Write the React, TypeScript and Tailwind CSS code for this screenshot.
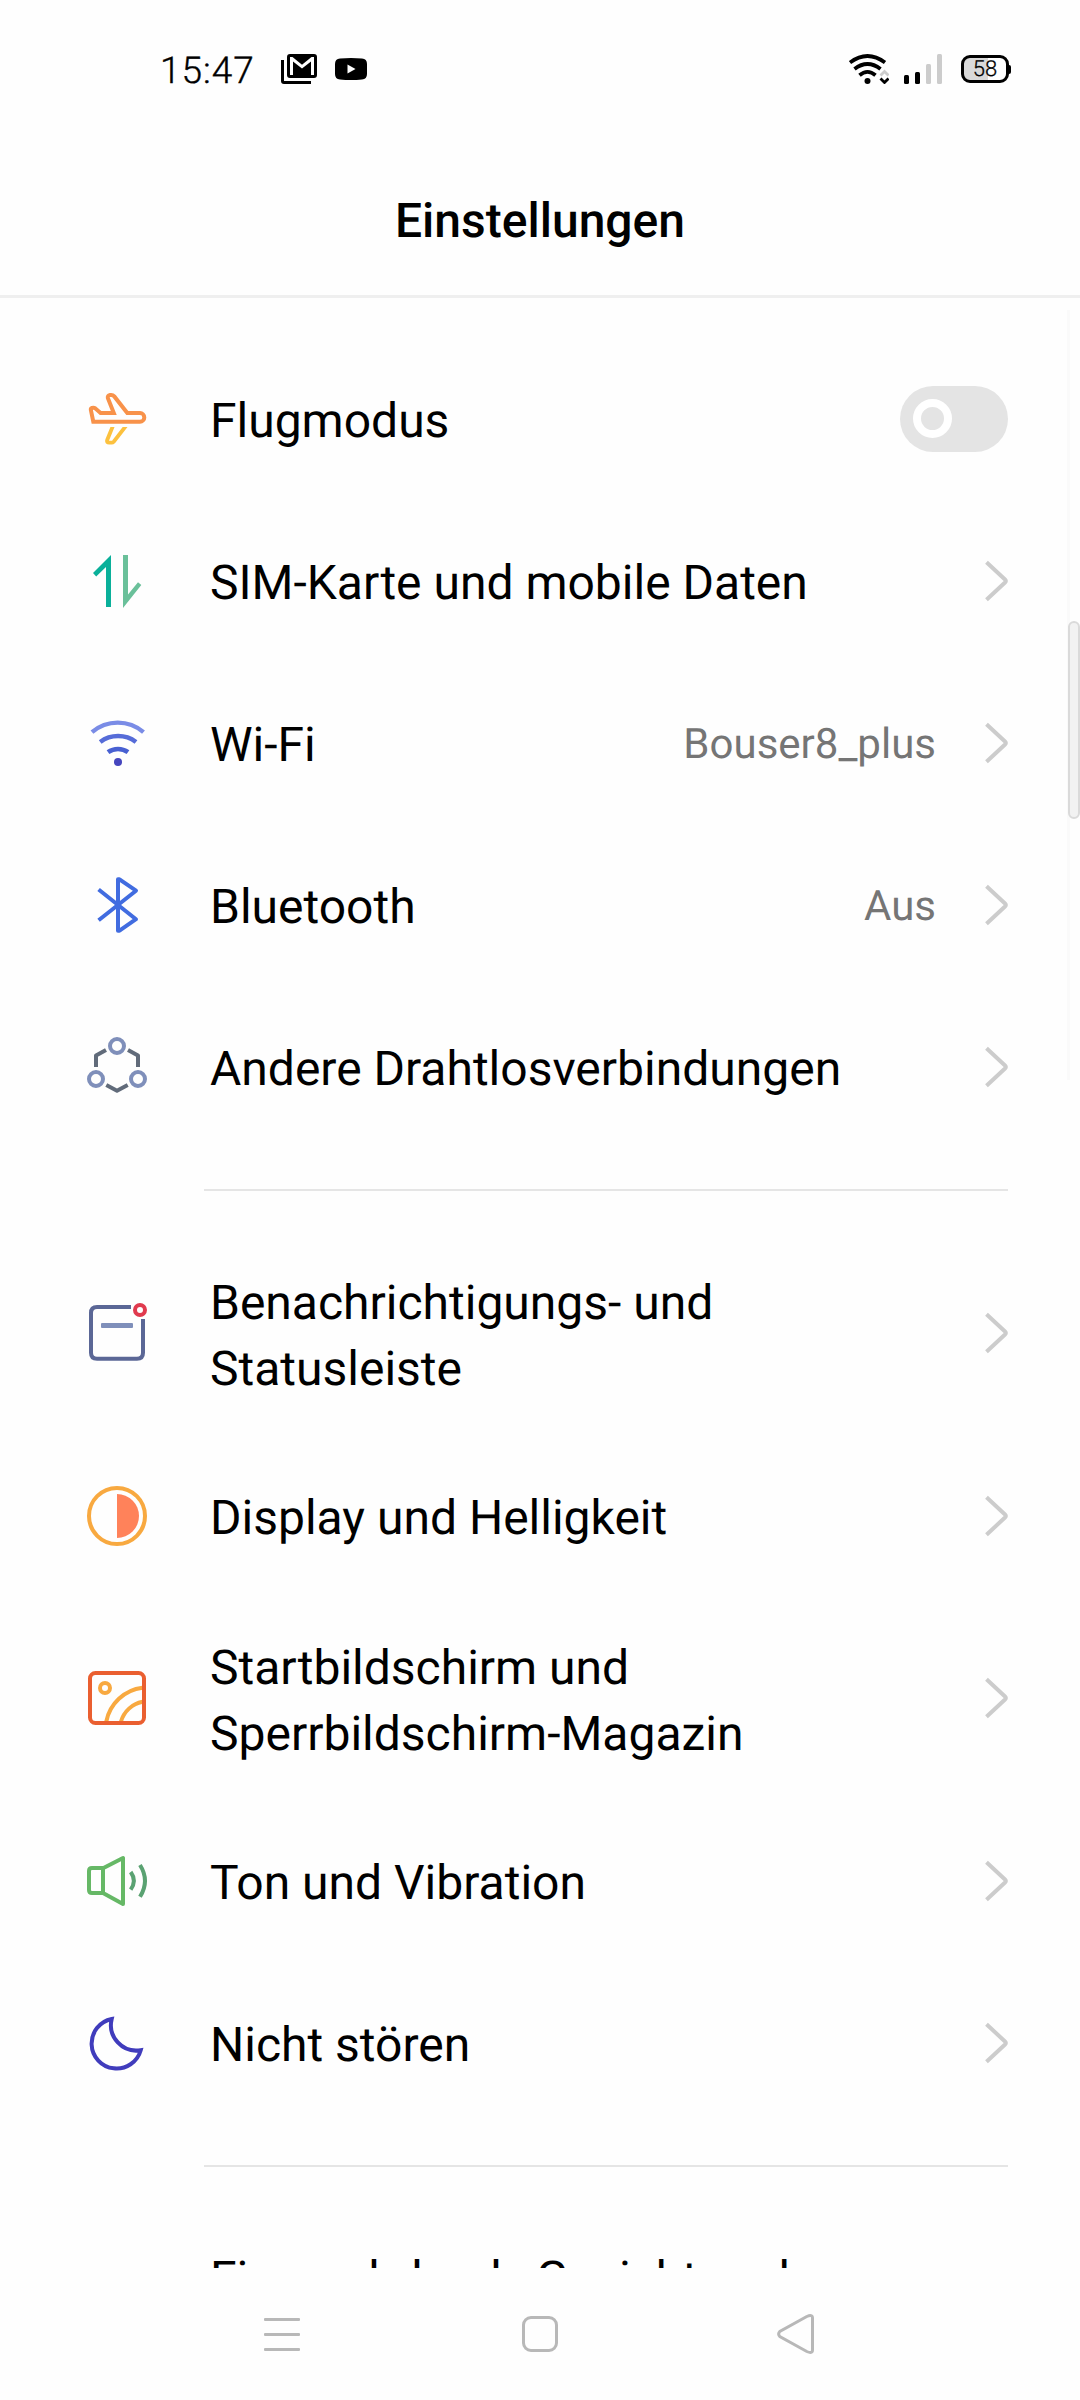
import type { ReactNode } from "react";

interface SettingsItem {
	id: string;
	lines: string[];
	icon: ReactNode;
	value?: string;
	toggle?: boolean;
}

function Icon({ children }: { children?: ReactNode }) {
	return (
		<svg className="h-[60px] w-[60px] shrink-0 overflow-visible" fill="none" viewBox="0 0 60 60">
			{children}
		</svg>
	);
}

const connectionItems: SettingsItem[] = [
	{
		id: "airplane",
		lines: ["Flugmodus"],
		toggle: true,
		icon: (
			<Icon>
				<clipPath id="lower-wing">
					<rect height="22" width="60" x="0" y="38" />
				</clipPath>
				<path
					d="M6.3 32.7H53a4.3 4.3 0 0 0 0-8.6H40.3L27.3 7.4Q26 6 24.2 6H23q-2.8.4-2.1 3.2L26.8 24H13.6L8.2 19.3Q6.7 18.4 5 19q-1.5.5-1.1 2.2Z"
					stroke="#f8924a"
					strokeWidth="4"
				/>
				<path
					clipPath="url(#lower-wing)"
					d="M26.5 35.5L20.2 51q-.8 2.7 2 2.7h2.4q1.2 0 2.1-1L41.2 34"
					stroke="#fcc13e"
					strokeWidth="3.8"
				/>
			</Icon>
		),
	},
	{
		id: "sim",
		lines: ["SIM-Karte und mobile Daten"],
		icon: (
			<Icon>
				<path d="M24 4L6 22l3.2 3.5L19 16v40h5z" fill="#0ab09a" />
				<path d="M36 4h5v39.5l10-12.2 3.3 2.7L36 57z" fill="#6ac09a" />
			</Icon>
		),
	},
	{
		id: "wifi",
		lines: ["Wi-Fi"],
		value: "Bouser8_plus",
		icon: (
			<Icon>
				<path d="M5 19.2A39.5 39.5 0 0 1 56.5 19.2" stroke="#7a8ce6" strokeWidth="4.4" />
				<path d="M13.2 29A30 30 0 0 1 49 29" stroke="#566cd8" strokeWidth="4.6" />
				<path d="M21 39.2A17 17 0 0 1 41 39.2" stroke="#4860d2" strokeWidth="4.6" />
				<circle cx="31" cy="49" fill="#4646be" r="4" />
			</Icon>
		),
	},
	{
		id: "bluetooth",
		lines: ["Bluetooth"],
		value: "Aus",
		icon: (
			<Icon>
				<path
					d="M11.6 14.5L49 44.2L32.5 55.7H31V4.3H32.5L49 15.7L11.6 45.2"
					stroke="#416ce0"
					strokeLinejoin="round"
					strokeWidth="4"
				/>
			</Icon>
		),
	},
	{
		id: "wireless",
		lines: ["Andere Drahtlosverbindungen"],
		icon: (
			<Icon>
				<g stroke="#616b7a" strokeLinejoin="round" strokeWidth="4">
					<path d="M19 13L9 18.5V30" />
					<path d="M41 13L51 18.5V30" />
					<path d="M19.3 48L30 53.7L40.7 48" />
				</g>
				<g stroke="#7f8fba" strokeWidth="4">
					<circle cx="30" cy="9" r="7" />
					<circle cx="9" cy="42" r="7" />
					<circle cx="51" cy="42" r="7" />
				</g>
			</Icon>
		),
	},
];

const deviceItems: SettingsItem[] = [
	{
		id: "notifications",
		lines: ["Benachrichtigungs- und", "Statusleiste"],
		icon: (
			<Icon>
				<path
					d="M44 4H10Q4 4 4 10V49.7Q4 55.7 10 55.7H50Q56 55.7 56 49.7V16"
					stroke="#5b6796"
					strokeWidth="4"
				/>
				<rect fill="#7f8fba" height="5" rx="1" width="32" x="14" y="20" />
				<circle cx="53" cy="7" r="5" stroke="#e03a4e" strokeWidth="4" />
			</Icon>
		),
	},
	{
		id: "display",
		lines: ["Display und Helligkeit"],
		icon: (
			<Icon>
				<circle cx="30" cy="30" r="28" stroke="#f8a940" strokeWidth="4" />
				<path d="M30 8a22 22 0 0 1 0 44z" fill="#ff825a" />
			</Icon>
		),
	},
	{
		id: "homescreen",
		lines: ["Startbildschirm und", "Sperrbildschirm-Magazin"],
		icon: (
			<Icon>
				<g stroke="#f8a940" strokeWidth="4">
					<circle cx="18" cy="20" r="5" />
					<path d="M19.3 53.5A42 42 0 0 1 55.5 19.7" />
					<path d="M34 53.5A28 28 0 0 1 55.5 33.8" />
				</g>
				<rect height="50" rx="5.5" stroke="#ea5f30" strokeWidth="4" width="54" x="3" y="5" />
			</Icon>
		),
	},
	{
		id: "sound",
		lines: ["Ton und Vibration"],
		icon: (
			<Icon>
				<g stroke="#66b866" strokeLinejoin="round" strokeWidth="4">
					<path d="M16 17H5Q2 17 2 20V39Q2 42 5 42H16Z" />
					<path d="M16 17.3L36 7V53L16 42" />
				</g>
				<g stroke="#5aa272" strokeWidth="4">
					<path d="M43.7 21Q50 29.8 43.7 38.6" />
					<path d="M53 14Q63 29.8 53 45.8" />
				</g>
			</Icon>
		),
	},
	{
		id: "dnd",
		lines: ["Nicht stören"],
		icon: (
			<Icon>
				<path d="M24.7 6A25 25 0 1 0 53.7 37.2A25.5 25.5 0 0 1 24.7 6Z" stroke="#403cbc" strokeWidth="4" />
			</Icon>
		),
	},
];

const securityItems: SettingsItem[] = [
	{
		id: "security",
		lines: ["Fingerabdruck, Gesicht und", "\u00a0"],
		icon: <Icon />,
	},
];

function Chevron() {
	return (
		<svg className="h-[42px] w-6 shrink-0" fill="none" viewBox="0 0 24 42">
			<path d="M2.5 2.2L21 19.5Q22.5 21 21 22.5L2.5 39.8" stroke="#cccccc" strokeWidth="4" />
		</svg>
	);
}

function Toggle() {
	return (
		<div className="flex h-[66px] w-[108px] items-center rounded-full bg-[#e4e4e4] pl-[13px]">
			<div className="h-[39px] w-[39px] rounded-full border-8 border-white" />
		</div>
	);
}

function SettingsRow({ item }: { item: SettingsItem }) {
	return (
		<li className="flex items-center pt-[35px] pr-[72px] pb-9 pl-[87px]">
			{item.icon}
			<div className="flex min-h-[91px] flex-1 items-center pl-[63px]">
				<p className={item.lines.length > 1 ? "-mb-[3px] pt-[3px]" : "-mb-[2px] pt-[2px]"}>
					{item.lines.map((line) => (
						<span className="block text-[48px] leading-[66px] whitespace-nowrap text-black" key={line}>
							{line}
						</span>
					))}
				</p>
			</div>
			{item.value && <span className="pt-[4px] pr-12 text-[42px] leading-[60px] text-[#757575]">{item.value}</span>}
			{item.toggle ? <Toggle /> : <Chevron />}
		</li>
	);
}

function Divider() {
	return <div className="mt-[41px] mr-[72px] mb-[41px] ml-[204px] h-[2px] bg-[#e5e5e5]" />;
}

function StatusBar() {
	return (
		<div className="flex h-[138px] shrink-0 items-center pr-[69px] pl-[160px]">
			<span className="w-[121px] pt-[6px] text-[37px] leading-[44px] font-light tracking-[1px] text-black [-webkit-text-stroke:0.4px]">
				15:47
			</span>
			<svg className="h-[30px] w-9" viewBox="0 0 36 30">
				<path d="M0 6h3v21h27v3H3q-3 0-3-3z" />
				<path
					d="M9 0H33Q36 0 36 3V21Q36 24 33 24H9Q6 24 6 21V3Q6 0 9 0ZM9 3V21H12V7.5L21 14.5L30 7.5V21H33V3H30.5L21 10.8L11.5 3Z"
					fillRule="evenodd"
				/>
			</svg>
			<svg className="ml-[18px] h-[22px] w-8" viewBox="0 0 32 22">
				<path d="M5 .6Q16-.4 27 .6Q32 1 32 6V16Q32 21 27 21.5Q16 22.5 5 21.5Q0 21 0 16V6Q0 1 5 .6Z" />
				<path d="M12.5 6.5V15.5L20.5 11Z" fill="#fff" />
			</svg>
			<svg className="ml-auto h-[30px] w-10" fill="none" viewBox="0 0 40 30">
				<g stroke="#000" strokeWidth="3.8">
					<path d="M1 8.5Q18.5-4.5 36 8.5" />
					<path d="M5.5 15Q18.5 5 31.5 15" />
					<path d="M10.5 21.2Q18.5 14.5 26.5 21.2" />
				</g>
				<circle cx="18.5" cy="27" fill="#000" r="3" />
				<path d="M31.5 21.5L35.5 17.5L39.5 21.5" stroke="#ccc" strokeWidth="2.8" />
				<path d="M31.5 24.5L35.5 28.5L39.5 24.5" stroke="#000" strokeWidth="2.8" />
			</svg>
			<svg className="ml-[15px] h-[30px] w-[38px]" viewBox="0 0 38 30">
				<rect height="9" rx="1.5" width="5" x="0" y="21" />
				<rect height="12" rx="1.5" width="5" x="11" y="18" />
				<rect fill="#ccc" height="20" rx="1.5" width="5" x="22" y="10" />
				<rect fill="#ccc" height="30" rx="1.5" width="5" x="33" y="0" />
			</svg>
			<div className="ml-[19px] flex items-center">
				<div className="flex h-7 w-12 items-center justify-center rounded-[9px] border-[3px] border-black bg-linear-to-r from-[#d9d9d9] from-58% to-white to-58% pt-px text-[22px] leading-none font-light text-black [-webkit-text-stroke:0.3px]">
					58
				</div>
				<div className="h-[9px] w-[2px] rounded-r-sm bg-black" />
			</div>
		</div>
	);
}

function NavBar() {
	return (
		<div className="flex h-[132px] shrink-0 items-center pl-[264px]">
			<svg className="h-[33px] w-9" fill="#b8b8b8" viewBox="0 0 36 33">
				<rect height="3" rx="1" width="36" y="0" />
				<rect height="3" rx="1" width="36" y="15" />
				<rect height="3" rx="1" width="36" y="30" />
			</svg>
			<div className="ml-[222px] h-9 w-9 rounded-[9px] border-[3px] border-[#b8b8b8]" />
			<svg className="ml-[219px] h-10 w-[38px]" fill="none" viewBox="0 0 38 40">
				<path
					d="M29.8 2.5L2.8 17.5Q.5 20 2.8 22.5L29.8 37.5Q35.5 40 35.5 36V4Q35.5 0 29.8 2.5Z"
					stroke="#b8b8b8"
					strokeWidth="3"
				/>
			</svg>
		</div>
	);
}

export default function App() {
	return (
		<div className="relative flex h-[2400px] w-[1080px] flex-col overflow-hidden bg-[#fefefe] font-[Roboto,sans-serif] [text-rendering:geometricPrecision]">
			<StatusBar />
			<header className="flex h-[160px] shrink-0 justify-center border-b-[3px] border-[#efefef] pt-[50px]">
				<h1 className="text-[48px] leading-[66px] font-medium text-black">Einstellungen</h1>
			</header>
			<main className="min-h-0 flex-1 overflow-hidden pt-10">
				<ul>
					{connectionItems.map((item) => (
						<SettingsRow item={item} key={item.id} />
					))}
				</ul>
				<Divider />
				<ul>
					{deviceItems.map((item) => (
						<SettingsRow item={item} key={item.id} />
					))}
				</ul>
				<Divider />
				<ul>
					{securityItems.map((item) => (
						<SettingsRow item={item} key={item.id} />
					))}
				</ul>
			</main>
			<NavBar />
			{/* scroll indicator */}
			<div className="absolute top-[310px] right-[10px] h-[770px] w-[3px] bg-[#fafafa]" />
			<div className="absolute top-[621px] right-0 h-[198px] w-3 rounded-full border-2 border-[#dadada] bg-[#f2f2f2]" />
		</div>
	);
}
